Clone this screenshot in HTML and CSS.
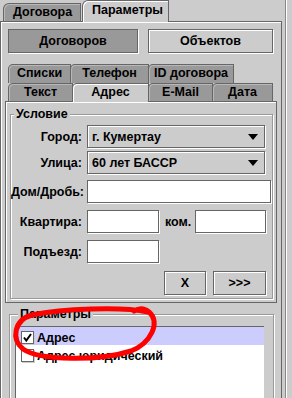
FILE: index.html
```html
<!DOCTYPE html>
<html lang="ru">

<head>
    <meta charset="UTF-8">
    <title>Параметры</title>
    <link rel="stylesheet" href="styles.css">
</head>

<body>
    <div class="screen">
        <div class="main">
            <div class="top-tabs">
                <div class="ttab">Договора</div>
                <div class="ttab ttab-on">Параметры</div>
            </div>
            <div class="main-panel">
                <div class="mode-row">
                    <button class="btn btn-down mode-a">Договоров</button>
                    <button class="btn mode-b">Объектов</button>
                </div>

                <div class="tab-run run-back">
                    <div class="stab w-spiski">Списки</div>
                    <div class="stab w-phone">Телефон</div>
                    <div class="stab w-id">ID договора</div>
                </div>
                <div class="tab-run run-front">
                    <div class="stab w-text">Текст</div>
                    <div class="stab stab-on w-addr">Адрес</div>
                    <div class="stab w-mail">E-Mail</div>
                    <div class="stab w-date">Дата</div>
                </div>

                <div class="sub-panel">
                    <fieldset class="group cond">
                        <legend>Условие</legend>
                        <div class="frow">
                            <span class="flabel">Город:</span>
                            <div class="combo">г. Кумертау<span class="arrow"></span></div>
                        </div>
                        <div class="frow r-street">
                            <span class="flabel">Улица:</span>
                            <div class="combo">60 лет БАССР<span class="arrow"></span></div>
                        </div>
                        <div class="frow r-house">
                            <span class="flabel">Дом/Дробь:</span>
                            <input class="field f-wide" type="text">
                        </div>
                        <div class="frow r-flat">
                            <span class="flabel">Квартира:</span>
                            <input class="field f-short" type="text">
                            <span class="klabel">ком.</span>
                            <input class="field f-room" type="text">
                        </div>
                        <div class="frow r-entr">
                            <span class="flabel">Подъезд:</span>
                            <input class="field f-short" type="text">
                        </div>
                        <div class="frow r-btns">
                            <button class="btn b-clear">X</button>
                            <button class="btn b-next">&gt;&gt;&gt;</button>
                        </div>
                    </fieldset>
                </div>

                <fieldset class="group params">
                    <legend>Параметры</legend>
                    <div class="list">
                        <div class="item item-sel">
                            <span class="check">
                                <svg width="11" height="11" viewBox="0 0 11 11">
                                    <path d="M2 5.5 L4.3 8.5 L9 2" fill="none" stroke="#000" stroke-width="2"/>
                                </svg>
                            </span>
                            Адрес
                        </div>
                        <div class="item">
                            <span class="check"></span>
                            Адрес юридический
                        </div>
                    </div>
                </fieldset>
            </div>
        </div>
        <div class="side"></div>

        <svg class="scribble" width="292" height="398" viewBox="0 0 292 398">
            <path d="M148 312 C120 306, 62 309, 32 315 C14 320, 11 339, 23 349 C40 361, 100 361, 131 351 C151 343, 161 322, 149 312 C144 308, 139 308, 134 311"
                fill="none" stroke="#ff0000" stroke-width="5" stroke-linecap="round" stroke-linejoin="round"/>
        </svg>
    </div>
</body>

</html>
```

FILE: styles.css
```css
* {
    box-sizing: border-box;
}

body {
    margin: 0;
    background: #cccccc;
    font: bold 12.5px "Liberation Sans", Arial, sans-serif;
    color: #000;
}

.screen {
    position: relative;
    width: 292px;
    height: 398px;
    overflow: hidden;
    display: flex;
}

.main {
    width: 282px;
    display: flex;
    flex-direction: column;
}

.side {
    flex: 1;
    margin-left: 3px;
    border-left: 1px solid #888;
    box-shadow: inset 1px 0 0 #fff;
}

/* top tabs */

.top-tabs {
    display: flex;
    align-items: flex-end;
    height: 21px;
    padding-left: 3px;
}

.ttab {
    width: 78px;
    height: 18px;
    line-height: 17px;
    padding-left: 9px;
    background: #999;
    border: 1px solid #666;
    border-bottom: 0;
    border-top-left-radius: 6px;
    box-shadow: inset 1px 1px 0 #b8b8b8;
}

.ttab-on {
    position: relative;
    z-index: 1;
    width: 87px;
    height: 22px;
    line-height: 19px;
    margin-left: 1px;
    margin-bottom: -1px;
    padding-left: 9px;
    background: #ccc;
    box-shadow: inset 1px 1px 0 #fff;
}

.main-panel {
    height: 400px;
    border: 1px solid #666;
    box-shadow: inset 1px 1px 0 #fff;
    padding: 7px 4px 0;
}

/* buttons */

.btn {
    font: inherit;
    color: #000;
    padding: 0;
    background: #ccc;
    border: 1px solid #666;
    box-shadow: inset 1px 1px 0 #fff, 1px 1px 0 #fff;
}

.btn-down {
    background: #999;
    box-shadow: 1px 1px 0 #fff;
}

.mode-row {
    display: flex;
    gap: 10px;
    padding-left: 3px;
}

.mode-a {
    width: 130px;
    height: 24px;
}

.mode-b {
    width: 125px;
    height: 24px;
}

/* inner tabs */

.tab-run {
    display: flex;
    padding-left: 3px;
}

.run-back {
    margin-top: 11px;
    height: 19px;
}

.run-front {
    height: 18px;
}

.stab {
    position: relative;
    margin-right: -1px;
    text-align: center;
    white-space: nowrap;
    background: #999;
    border: 1px solid #666;
    border-bottom: 0;
    border-top-left-radius: 5px;
    box-shadow: inset 1px 1px 0 #b8b8b8;
}

.run-back .stab {
    height: 19px;
    line-height: 17px;
}

.run-front .stab {
    height: 18px;
    line-height: 17px;
}

.run-front .stab-on {
    z-index: 1;
    height: 19px;
    margin-bottom: -1px;
    background: #ccc;
    box-shadow: inset 1px 1px 0 #fff;
}

.w-spiski { width: 63px; }
.w-phone { width: 79px; }
.w-id { width: 86px; }
.w-text { width: 65px; }
.w-addr { width: 77px; }
.w-mail { width: 65px; }
.w-date { width: 61px; }

.sub-panel {
    height: 202px;
    border: 1px solid #666;
    box-shadow: inset 1px 1px 0 #fff;
    padding-top: 0;
}

/* groups */

.group {
    min-width: 0;
    margin: 5px 3px 0 4px;
    border: 1px solid #999;
    box-shadow: inset 1px 1px 0 #fff, 1px 1px 0 #fff;
}

.group legend {
    margin-left: 3px;
    padding: 0 2px;
    line-height: 14px;
    background: #ccc;
}

.cond {
    padding: 4px 0 3px 0;
}

.params {
    margin-top: 4px;
    padding: 5px 0 0 5px;
    height: 120px;
}

.frow {
    display: flex;
    align-items: center;
    height: 23px;
}

.flabel {
    width: 71px;
    margin-right: 5px;
    text-align: right;
    white-space: nowrap;
}

.r-street { margin-top: 3px; }
.r-house { margin-top: 6px; height: 23px; }
.r-flat { margin-top: 7px; }
.r-entr { margin-top: 7px; }
.r-btns { margin-top: 8px; height: 24px; }

.combo {
    display: flex;
    align-items: center;
    width: 178px;
    height: 23px;
    padding-left: 4px;
    background: #ccc;
    border: 1px solid #666;
    box-shadow: inset 1px 1px 0 #fff, 1px 1px 0 #fff;
}

.arrow {
    margin-left: auto;
    margin-right: 6px;
    border-top: 6px solid #000;
    border-left: 5px solid transparent;
    border-right: 5px solid transparent;
}

.field {
    height: 23px;
    margin: 0;
    padding: 0;
    background: #fff;
    border: 1px solid #666;
    box-shadow: 1px 1px 0 #fff;
    outline: none;
}

.f-wide { width: 184px; }
.f-short { width: 72px; }
.f-room { width: 71px; }

.klabel {
    width: 30px;
    margin-left: 6px;
}

.b-clear {
    width: 42px;
    height: 24px;
    margin-left: 153px;
}

.b-next {
    width: 53px;
    height: 24px;
    margin-left: 7px;
}

/* list */

.list {
    width: 249px;
    height: 100px;
    background: #fff;
    border-top: 1px solid #666;
    border-left: 1px solid #666;
}

.item {
    display: flex;
    align-items: center;
    height: 18px;
    padding: 3px 0 0 5px;
}

.item-sel {
    background: #ccccff;
}

.check {
    display: flex;
    align-items: center;
    justify-content: center;
    width: 13px;
    height: 13px;
    margin-right: 3px;
    background: #fff;
    border: 1px solid #666;
    box-shadow: 1px 1px 0 #ccc;
}

.scribble {
    position: absolute;
    left: 0;
    top: 0;
    pointer-events: none;
}
```
